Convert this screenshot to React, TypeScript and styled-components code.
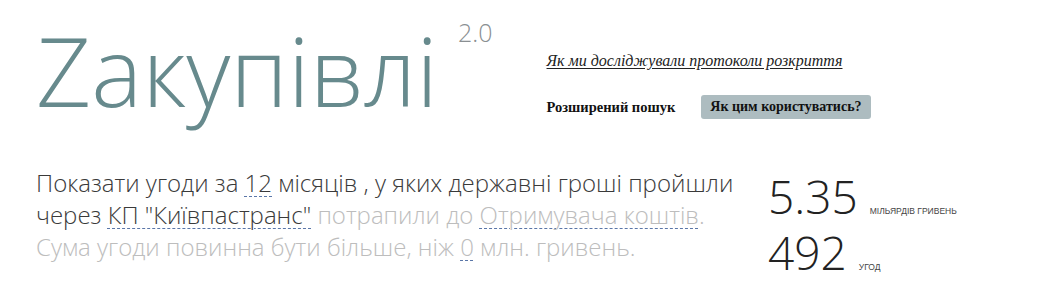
import React from "react";
import styled, { createGlobalStyle } from "styled-components";

const Global = createGlobalStyle`
  html, body { margin: 0; padding: 0; background: #ffffff; }
  body { font-family: "Open Sans", "Noto Sans", sans-serif; }
`;

const Page = styled.div`
  width: 1038px;
  height: 292px;
  padding-left: 36px;
  box-sizing: border-box;
  overflow: hidden;
`;

const Header = styled.header`
  display: flex;
  align-items: flex-start;
`;

const Title = styled.h1`
  margin: 22px 0 0 0;
  font-family: "Open Sans", sans-serif;
  font-weight: 300;
  font-size: 96px;
  line-height: 1;
  color: #678a8d;
  letter-spacing: 0;
`;

const Version = styled.span`
  margin: 20px 0 0 20px;
  font-family: "Open Sans", sans-serif;
  font-weight: 300;
  font-size: 25px;
  line-height: 1;
  color: #8a8f92;
`;

const Side = styled.div`
  margin: 52px 0 0 54px;
  display: flex;
  flex-direction: column;
  align-items: flex-start;
  gap: 25px;
`;

const StoryLink = styled.a`
  font-family: "Liberation Serif", serif;
  font-style: italic;
  font-size: 16px;
  color: #222;
  text-decoration: underline;
  text-underline-offset: 2px;
`;

const Tools = styled.div`
  display: flex;
  align-items: center;
  gap: 26px;
`;

const ToolLink = styled.span`
  font-family: "Liberation Serif", serif;
  font-weight: 700;
  font-size: 14.5px;
  color: #111;
`;

const HelpButton = styled.button`
  font-family: "Liberation Serif", serif;
  font-weight: 700;
  font-size: 14px;
  color: #111;
  background: #adbcc0;
  border: none;
  border-radius: 3px;
  padding: 3px 9px 4px;
  height: 24px;
  line-height: 17px;
`;

const Body = styled.section`
  display: flex;
  align-items: flex-start;
  margin-top: 48px;
`;

const Sentence = styled.p`
  width: 722px;
  margin: 0;
  font-family: "Open Sans", sans-serif;
  font-weight: 300;
  font-size: 24px;
  line-height: 32px;
  color: #3a3a3a;
`;

const Faded = styled.span`
  color: #bdbdbd;
`;

const Choice = styled.span`
  text-decoration: underline dashed #5a76a8;
  text-decoration-thickness: 1px;
  text-underline-offset: 4px;
`;

const Stats = styled.div`
  margin: 1px 0 0 10px;
  display: flex;
  flex-direction: column;
`;

const StatRow = styled.div`
  display: flex;
  align-items: baseline;
  gap: 12px;
`;

const StatValue = styled.span`
  font-family: "Open Sans", sans-serif;
  font-weight: 300;
  font-size: 46px;
  line-height: 56px;
  color: #222;
`;

const StatUnit = styled.span`
  font-family: "Liberation Sans", Arial, sans-serif;
  font-size: 8.5px;
  text-transform: uppercase;
  color: #444;
`;

export default function App() {
  return (
    <Page>
      <Global />
      <Header>
        <Title>Zакупівлі</Title>
        <Version>2.0</Version>
        <Side>
          <StoryLink href="#">Як ми досліджували протоколи розкриття</StoryLink>
          <Tools>
            <ToolLink>Розширений пошук</ToolLink>
            <HelpButton>Як цим користуватись?</HelpButton>
          </Tools>
        </Side>
      </Header>
      <Body>
        <Sentence>
          Показати угоди за <Choice>12</Choice> місяців , у яких державні гроші пройшли через{" "}
          <Choice>КП "Київпастранс"</Choice>{" "}
          <Faded>
            потрапили до <Choice>Отримувача коштів</Choice>. Сума угоди повинна бути більше, ніж{" "}
            <Choice>0</Choice> млн. гривень.
          </Faded>
        </Sentence>
        <Stats>
          <StatRow>
            <StatValue>5.35</StatValue>
            <StatUnit>мільярдів гривень</StatUnit>
          </StatRow>
          <StatRow>
            <StatValue>492</StatValue>
            <StatUnit>угод</StatUnit>
          </StatRow>
        </Stats>
      </Body>
    </Page>
  );
}
